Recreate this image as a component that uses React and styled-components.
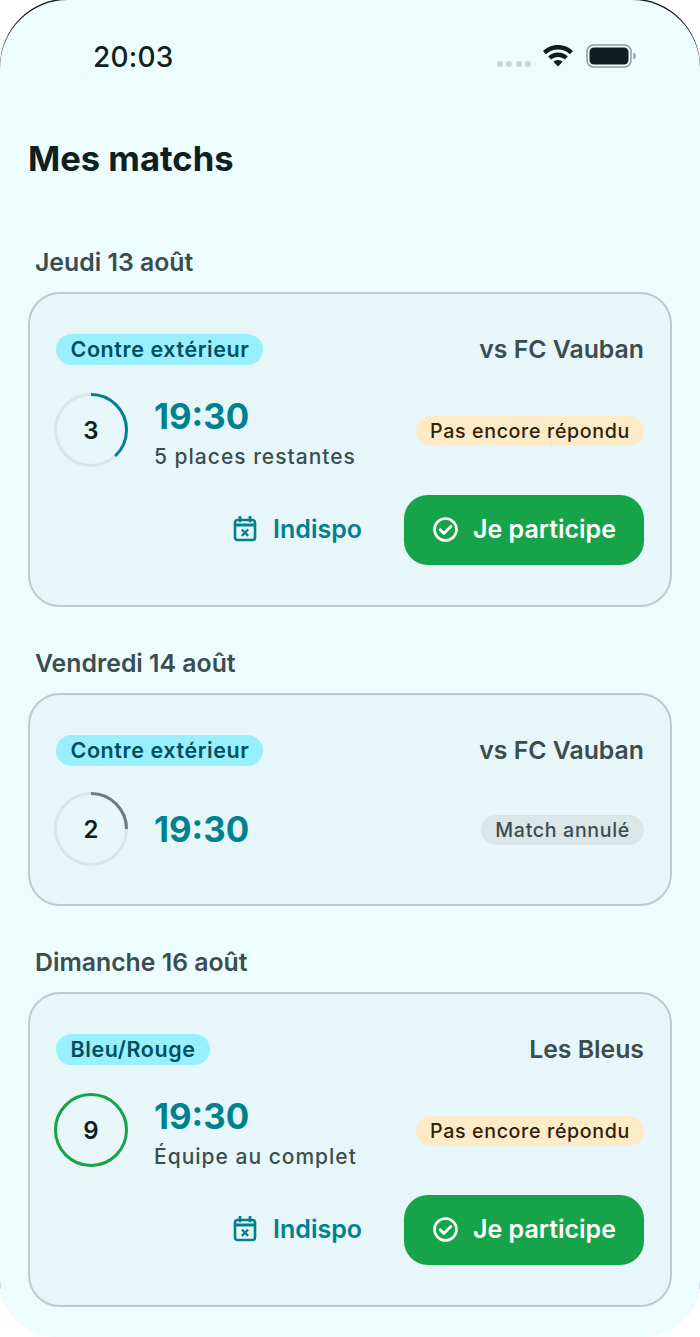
import React from "react";
import styled, { createGlobalStyle } from "styled-components";

const Global = createGlobalStyle`
  html, body { margin: 0; padding: 0; background: #fff; }
  body { font-family: Inter, "Liberation Sans", sans-serif; overflow: hidden; }
  * { box-sizing: border-box; }
`;

const Screen = styled.div`
  width: 700px;
  height: 1337px;
  background: #ecfcff;
  border-radius: 68px 68px 56px 56px;
  box-shadow: 0 -1.5px 0 #111c1e;
  overflow: hidden;
`;

const StatusBar = styled.div`
  height: 136px;
  padding: 41px 64px 0 93px;
  display: flex;
  justify-content: space-between;
  align-items: flex-start;
`;

const Clock = styled.div`
  font-size: 28px;
  line-height: 32px;
  font-weight: 500;
  color: #141f21;
  letter-spacing: 0.2px;
`;

const StatusIcons = styled.div`
  display: flex;
  align-items: center;
  gap: 12px;
  padding-top: 3px;
`;

const Signal = styled.div`
  display: flex;
  gap: 3.5px;
  margin-top: 15px;
  margin-right: -1px;
`;

const Dot = styled.span`
  width: 6px;
  height: 6px;
  border-radius: 50%;
  background: #c9d4d6;
`;

const Title = styled.h1`
  margin: 0 0 0 28px;
  height: 111px;
  font-size: 34.6px;
  line-height: 44px;
  font-weight: 700;
  color: #10201f;
`;

const DayList = styled.div`
  padding: 0 28px;
`;

const Day = styled.section`
  margin-bottom: 41px;
`;

const DayLabel = styled.h2`
  margin: 0 0 15px 7px;
  padding-top: 1px;
  font-size: 24.8px;
  line-height: 29px;
  font-weight: 600;
  color: #3c4d50;
`;

const Card = styled.article`
  border: 2px solid #bccbcc;
  border-radius: 32px;
  background: #e7f6f8;
  padding: 40px 26px 38px;
  display: flex;
  flex-direction: column;
  gap: 26px;
`;

const Row = styled.div`
  display: flex;
  align-items: center;
  justify-content: space-between;
`;

const TagPill = styled.span`
  background: #98f0ff;
  color: #004f5c;
  font-size: 21.5px;
  line-height: 31px;
  height: 31px;
  font-weight: 600;
  padding: 0 14px 0 14.5px;
  border-radius: 16px;
  letter-spacing: 0.58px;
`;

const Opponent = styled.span`
  font-size: 24.8px;
  line-height: 28px;
  margin-bottom: 2px;
  font-weight: 600;
  color: #3c4d50;
`;

const MatchInfo = styled.div`
  display: flex;
  align-items: center;
  gap: 26px;
  margin-left: -2px;
`;

const RingWrap = styled.div`
  position: relative;
  width: 74px;
  height: 74px;
`;

const RingCount = styled.span`
  position: absolute;
  inset: 0;
  display: flex;
  align-items: center;
  justify-content: center;
  font-size: 24px;
  font-weight: 600;
  color: #111c1e;
`;

const TimeBlock = styled.div`
  display: flex;
  flex-direction: column;
  gap: 2px;
`;

const Time = styled.span`
  font-size: 34.8px;
  line-height: 50px;
  font-weight: 650;
  color: #00818f;
  &:only-child {
    margin-top: -1px;
  }
`;

const Note = styled.span`
  font-size: 21px;
  line-height: 28px;
  margin-bottom: -2px;
  font-weight: 500;
  color: #3c4d50;
  letter-spacing: 1px;
`;

const StatusPill = styled.span`
  height: 30px;
  line-height: 30px;
  margin-top: 2px;
  font-size: 19.6px;
  font-weight: 450;
  padding: 0 14px;
  border-radius: 15px;
  letter-spacing: 0.66px;
  background: ${(p) => (p.$cancelled ? "#dbe6e8" : "#fdebc8")};
  color: ${(p) => (p.$cancelled ? "#3c4d50" : "#2f2209")};
`;

const Actions = styled.div`
  display: flex;
  justify-content: flex-end;
  align-items: center;
  gap: 42px;
  margin-bottom: 2px;
`;

const GhostButton = styled.button`
  display: flex;
  align-items: center;
  gap: 16px;
  border: 0;
  padding: 0 0 2px;
  background: none;
  color: #00818f;
  font: 600 25px/30px Inter, sans-serif;
`;

const PrimaryButton = styled.button`
  width: 240px;
  height: 70px;
  border: 0;
  padding: 0 0 2px 1px;
  border-radius: 24px;
  background: #17a34a;
  color: #fff;
  display: flex;
  align-items: center;
  justify-content: center;
  gap: 15px;
  font: 600 25px/30px Inter, sans-serif;
`;

const Ring = ({ value, color, progress }) => {
  const r = 35.5;
  const c = 2 * Math.PI * r;
  return (
    <RingWrap>
      <svg width="74" height="74" viewBox="0 0 74 74">
        <circle cx="37" cy="37" r={r} fill="none" stroke="#dbe5e7" strokeWidth="3" />
        <circle
          cx="37"
          cy="37"
          r={r}
          fill="none"
          stroke={color}
          strokeWidth="3"
          strokeDasharray={`${c * progress} ${c}`}
          transform="rotate(-90 37 37)"
        />
      </svg>
      <RingCount>{value}</RingCount>
    </RingWrap>
  );
};

const CalendarX = () => (
  <svg width="24" height="26" viewBox="0 0 24 26" fill="none" stroke="#00818f">
    <rect x="2" y="4" width="20" height="20" rx="2.5" strokeWidth="2.6" />
    <path d="M2 9h20" strokeWidth="3" />
    <path d="M7 1v4M17 1v4" strokeWidth="2.8" strokeLinecap="round" />
    <path d="M8.8 13.500l6.400 6.400M15.200 13.500l-6.400 6.400" strokeWidth="2.2" />
  </svg>
);

const CheckCircle = () => (
  <svg width="25" height="25" viewBox="0 0 25 25" fill="none" stroke="#fff">
    <circle cx="12.5" cy="12.5" r="11" strokeWidth="2.6" />
    <path d="M7.200 12.800l3.600 3.600 7-7" strokeWidth="2.800" strokeLinecap="round" strokeLinejoin="round" />
  </svg>
);

const Wifi = () => (
  <svg width="32" height="24" viewBox="0 0 32 24" fill="#111c1e">
    <path d="M16 1C10 1 4.800 3.300 1 7l3 3.200C7 7.200 11.300 5.400 16 5.400s9 1.800 12 4.800l3-3.200C27.200 3.300 22 1 16 1z" />
    <path d="M16 8.600c-3.800 0-7.300 1.500-9.800 3.900l3 3.100c1.700-1.700 4.200-2.700 6.800-2.700s5.100 1 6.800 2.700l3-3.100c-2.500-2.400-6-3.900-9.800-3.900z" />
    <path d="M16 16c-1.800 0-3.400.7-4.600 1.800L16 22.600l4.600-4.800C19.400 16.700 17.800 16 16 16z" />
  </svg>
);

const Battery = () => (
  <svg width="50" height="24" viewBox="0 0 50 24">
    <rect x="1" y="1" width="44" height="22" rx="6.500" fill="none" stroke="#8f9a9c" strokeWidth="1.500" />
    <rect x="3.500" y="3.500" width="39" height="17" rx="4.500" fill="#111c1e" />
    <path d="M47.500 8.500c1.500.5 2.300 2 2.300 3.500s-.8 3-2.300 3.500z" fill="#8f9a9c" />
  </svg>
);

const Match = ({ tag, opponent, value, color, progress, note, cancelled }) => (
  <Card>
    <Row>
      <TagPill>{tag}</TagPill>
      <Opponent>{opponent}</Opponent>
    </Row>
    <Row>
      <MatchInfo>
        <Ring value={value} color={color} progress={progress} />
        <TimeBlock>
          <Time>19:30</Time>
          {note && <Note>{note}</Note>}
        </TimeBlock>
      </MatchInfo>
      <StatusPill $cancelled={cancelled}>{cancelled ? "Match annulé" : "Pas encore répondu"}</StatusPill>
    </Row>
    {!cancelled && (
      <Actions>
        <GhostButton><CalendarX />Indispo</GhostButton>
        <PrimaryButton><CheckCircle />Je participe</PrimaryButton>
      </Actions>
    )}
  </Card>
);

export default function App() {
  return (
    <>
      <Global />
      <Screen>
        <StatusBar>
          <Clock>20:03</Clock>
          <StatusIcons>
            <Signal><Dot /><Dot /><Dot /><Dot /></Signal>
            <Wifi />
            <Battery />
          </StatusIcons>
        </StatusBar>
        <Title>Mes matchs</Title>
        <DayList>
          <Day>
            <DayLabel>Jeudi 13 août</DayLabel>
            <Match tag="Contre extérieur" opponent="vs FC Vauban" value="3" color="#00818f" progress={0.38} note="5 places restantes" />
          </Day>
          <Day>
            <DayLabel>Vendredi 14 août</DayLabel>
            <Match tag="Contre extérieur" opponent="vs FC Vauban" value="2" color="#6f7c7e" progress={0.25} cancelled />
          </Day>
          <Day>
            <DayLabel>Dimanche 16 août</DayLabel>
            <Match tag="Bleu/Rouge" opponent="Les Bleus" value="9" color="#17a34a" progress={1} note="Équipe au complet" />
          </Day>
        </DayList>
      </Screen>
    </>
  );
}
